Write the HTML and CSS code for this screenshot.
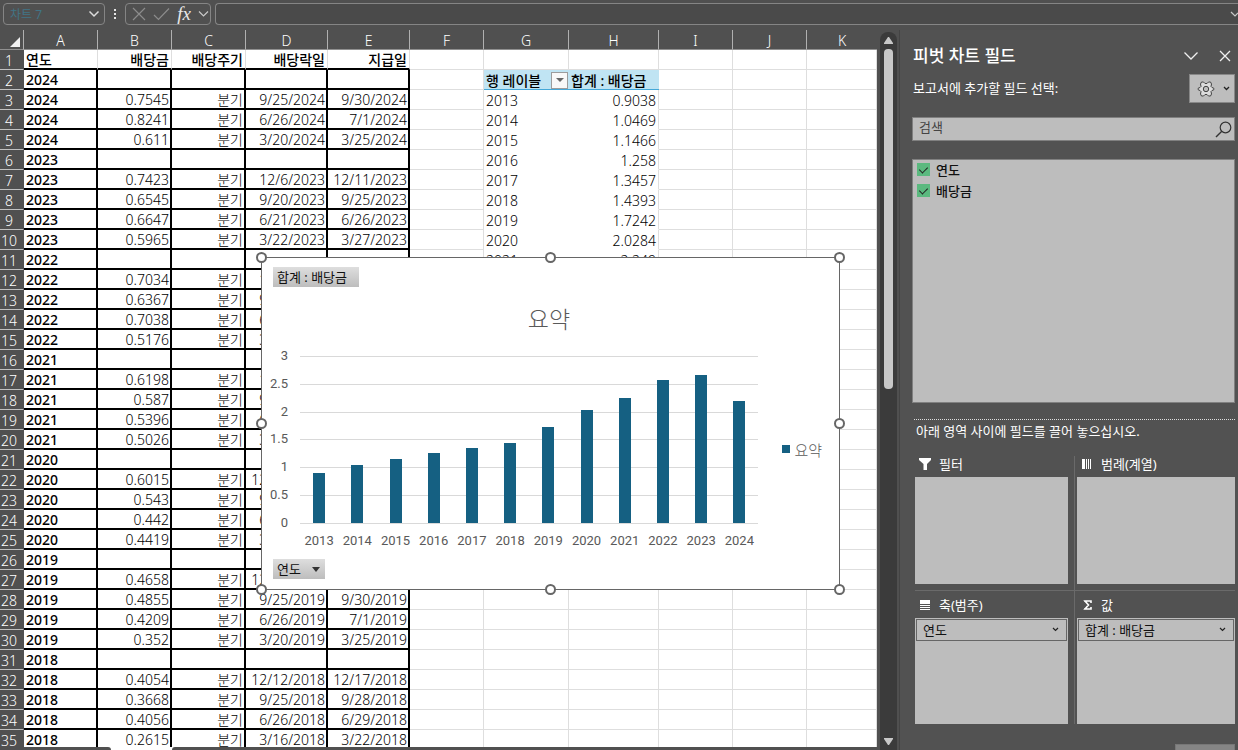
FILE: index.html
```html
<!DOCTYPE html>
<html lang="ko">
<head>
<meta charset="utf-8">
<title>배당금 피벗 차트</title>
<link rel="stylesheet" href="styles.css">
</head>
<body>
<header class="formula-bar">
  <div class="name-box">
    <input class="name-input" type="text" value="차트 7" aria-label="이름 상자">
    <button class="plain" aria-label="이름 목록"><svg width="12" height="8" viewBox="0 0 12 8"><path d="M1.5 1.500 6 6l4.500-4.500" fill="none" stroke="#dcdcdc" stroke-width="1.500"/></svg></button>
  </div>
  <svg class="grip" width="4" height="12" viewBox="0 0 4 12"><path d="M1 1h2v2H1zM1 5h2v2H1zM1 9h2v2H1z" fill="#e6e6e6"/></svg>
  <div class="fx-box">
    <button class="plain" aria-label="취소"><svg width="14" height="14" viewBox="0 0 14 14"><path d="M1 1l12 12M13 1 1 13" fill="none" stroke="#8c8c8c" stroke-width="1.200"/></svg></button>
    <button class="plain" aria-label="입력"><svg width="17" height="14" viewBox="0 0 17 14"><path d="M1 8l4.500 4.500L16 1.500" fill="none" stroke="#8c8c8c" stroke-width="1.200"/></svg></button>
    <button class="plain fx" aria-label="함수 삽입">fx</button>
    <button class="plain" aria-label="함수 목록"><svg width="11" height="8" viewBox="0 0 11 8"><path d="M1 1.500 5.500 6 10 1.500" fill="none" stroke="#c8c8c8" stroke-width="1.200"/></svg></button>
  </div>
  <input class="formula-input" type="text" aria-label="수식 입력줄">
  <button class="plain expand" aria-label="수식 입력줄 확장"><svg width="8" height="6" viewBox="0 0 8 6"><path d="M1 1l4 4 3-3" fill="none" stroke="#c8c8c8" stroke-width="1.200"/></svg></button>
</header>
<div class="workspace">
  <main class="sheet">
    <table class="grid">
      <colgroup><col class="w-head"><col class="w-s"><col class="w-s"><col class="w-s"><col class="w-date"><col class="w-date"><col class="w-s"><col class="w-g"><col class="w-h"><col class="w-s"><col class="w-s"><col></colgroup>
      <thead><tr><th><svg class="corner" width="10" height="10" viewBox="0 0 10 10"><path d="M10 0v10H0z" fill="#f0f0f0"/></svg></th><th>A</th><th>B</th><th>C</th><th>D</th><th>E</th><th>F</th><th>G</th><th>H</th><th>I</th><th>J</th><th>K</th></tr></thead>
      <tbody id="rows"></tbody>
    </table>
    <div class="tabs"><span class="tab-left"></span><span class="tab-rest"></span></div>
    <section class="chart" aria-label="피벗 차트">
      <button class="field-btn">합계 : 배당금</button>
      <h2 class="chart-title">요약</h2>
      <div class="chart-body">
        <div class="y-axis"><span>3</span><span>2.5</span><span>2</span><span>1.5</span><span>1</span><span>0.5</span><span>0</span></div>
        <div class="plot">
          <div class="plot-area">
            <div class="lines"><i></i><i></i><i></i><i></i><i></i><i></i><i></i></div>
            <div class="bars" id="bars"></div>
          </div>
          <div class="x-axis" id="years"></div>
        </div>
        <div class="legend"><i></i>요약</div>
      </div>
      <button class="field-btn year-btn">연도<svg width="8" height="5" viewBox="0 0 8 5"><path d="M0 0h8L4 5z" fill="#333"/></svg></button>
      <i class="handle t l"></i><i class="handle t c"></i><i class="handle t r"></i>
      <i class="handle m l"></i><i class="handle m r"></i>
      <i class="handle b l"></i><i class="handle b c"></i><i class="handle b r"></i>
    </section>
  </main>
  <div class="scrollbar">
    <svg width="9" height="8" viewBox="0 0 9 8"><path d="M4 0h1l4 6v1H0V6z" fill="#c8c8c8"/></svg>
    <span class="thumb"></span>
    <svg class="down" width="9" height="8" viewBox="0 0 9 8"><path d="M0 0h9v1L5 7H4L0 1z" fill="#c8c8c8"/></svg>
  </div>
  <aside class="panel">
    <div class="panel-head">
      <h1>피벗 차트 필드</h1>
      <button class="plain" aria-label="작업창 옵션"><svg width="16" height="10" viewBox="0 0 16 10"><path d="M1.500 1.500 8 8l6.500-6.500" fill="none" stroke="#f0f0f0" stroke-width="1.300"/></svg></button>
      <button class="plain" aria-label="닫기"><svg width="12" height="12" viewBox="0 0 12 12"><path d="M1 1l10 10M11 1 1 11" fill="none" stroke="#f0f0f0" stroke-width="1.300"/></svg></button>
    </div>
    <div class="panel-sub">
      <span>보고서에 추가할 필드 선택:</span>
      <button class="gear" aria-label="도구">
        <svg width="18" height="18" viewBox="0 0 18 18"><path d="M4.500 2h2L8 3.500h2L11.500 2h2L14.500 4l-.5 2.500 1 1 1.800.7v1.600l-1.800.7-1 1 .5 2.500-1 2h-2L10 14.500H8L6.500 16h-2l-1-2 .5-2.500-1-1-1.800-.7V8.200L3 7.500l1-1L3.500 4z" fill="#dcdcdc" stroke="#444"/><circle cx="9" cy="9" r="2.700" fill="#bdbdbd" stroke="#444"/></svg>
        <svg width="7" height="5" viewBox="0 0 7 5"><path d="M1 1l2.500 2.500L6 1" fill="none" stroke="#222" stroke-width="1.300"/></svg>
      </button>
    </div>
    <div class="search">
      <input type="text" placeholder="검색" aria-label="검색">
      <svg width="17" height="17" viewBox="0 0 17 17"><circle cx="10.500" cy="6.500" r="5.300" fill="none" stroke="#333" stroke-width="1.200"/><path d="M6.800 10.300 1 16" stroke="#333" stroke-width="1.400"/></svg>
    </div>
    <div class="fields">
      <label><input type="checkbox" checked>연도</label>
      <label><input type="checkbox" checked>배당금</label>
    </div>
    <p class="hint">아래 영역 사이에 필드를 끌어 놓으십시오.</p>
    <div class="areas">
      <section class="area">
        <h3><svg width="12" height="12" viewBox="0 0 12 12"><path d="M0 0h12v2L8 6v6H4.500V6L0 2z" fill="#fff"/></svg>필터</h3>
        <div class="drop"></div>
      </section>
      <section class="area">
        <h3><svg width="12" height="12" viewBox="0 0 12 12"><path d="M1 1h3v10H1zM5 1h1v10H5zM7 1h1v10H7zM9 1h1v10H9z" fill="#fff"/></svg>범례(계열)</h3>
        <div class="drop"></div>
      </section>
      <section class="area">
        <h3><svg width="12" height="12" viewBox="0 0 12 12"><path d="M1 1h10v4H1zM1 6h10v1H1zM1 8h10v1H1zM1 10h10v1H1z" fill="#fff"/></svg>축(범주)</h3>
        <div class="drop"><button class="chip">연도<svg width="7" height="5" viewBox="0 0 7 5"><path d="M1 1l2.500 2.500L6 1" fill="none" stroke="#222" stroke-width="1.200"/></svg></button></div>
      </section>
      <section class="area">
        <h3><svg width="12" height="12" viewBox="0 0 12 12"><path d="M10 4V2H4l3.500 4L4 10h6V8M3 2h5M3 10h5" fill="none" stroke="#fff" stroke-width="1.600"/></svg>값</h3>
        <div class="drop"><button class="chip">합계 : 배당금<svg width="7" height="5" viewBox="0 0 7 5"><path d="M1 1l2.500 2.500L6 1" fill="none" stroke="#222" stroke-width="1.200"/></svg></button></div>
      </section>
    </div>
    <button class="update" aria-label="업데이트"></button>
  </aside>
</div>
<script src="app.js"></script>
</body>
</html>
```

FILE: app.js
```js
const rows = [
  ['연도', '배당금', '배당주기', '배당락일', '지급일'],
  ['2024'],
  ['2024', '0.7545', '분기', '9/25/2024', '9/30/2024'],
  ['2024', '0.8241', '분기', '6/26/2024', '7/1/2024'],
  ['2024', '0.611', '분기', '3/20/2024', '3/25/2024'],
  ['2023'],
  ['2023', '0.7423', '분기', '12/6/2023', '12/11/2023'],
  ['2023', '0.6545', '분기', '9/20/2023', '9/25/2023'],
  ['2023', '0.6647', '분기', '6/21/2023', '6/26/2023'],
  ['2023', '0.5965', '분기', '3/22/2023', '3/27/2023'],
  ['2022'],
  ['2022', '0.7034', '분기', '12/7/2022'],
  ['2022', '0.6367', '분기', '9/21/2022'],
  ['2022', '0.7038', '분기', '6/22/2022'],
  ['2022', '0.5176', '분기', '3/23/2022'],
  ['2021'],
  ['2021', '0.6198', '분기', '12/8/2021'],
  ['2021', '0.587', '분기', '9/22/2021'],
  ['2021', '0.5396', '분기', '6/23/2021'],
  ['2021', '0.5026', '분기', '3/24/2021'],
  ['2020'],
  ['2020', '0.6015', '분기', '12/10/2020'],
  ['2020', '0.543', '분기', '9/23/2020'],
  ['2020', '0.442', '분기', '6/24/2020'],
  ['2020', '0.4419', '분기', '3/25/2020'],
  ['2019'],
  ['2019', '0.4658', '분기', '12/16/2019'],
  ['2019', '0.4855', '분기', '9/25/2019', '9/30/2019'],
  ['2019', '0.4209', '분기', '6/26/2019', '7/1/2019'],
  ['2019', '0.352', '분기', '3/20/2019', '3/25/2019'],
  ['2018'],
  ['2018', '0.4054', '분기', '12/12/2018', '12/17/2018'],
  ['2018', '0.3668', '분기', '9/25/2018', '9/28/2018'],
  ['2018', '0.4056', '분기', '6/26/2018', '6/29/2018'],
  ['2018', '0.2615', '분기', '3/16/2018', '3/22/2018']
];
const totals = [
  ['2013', 0.9038], ['2014', 1.0469], ['2015', 1.1466], ['2016', 1.258],
  ['2017', 1.3457], ['2018', 1.4393], ['2019', 1.7242], ['2020', 2.0284],
  ['2021', 2.249], ['2022', 2.5615], ['2023', 2.658], ['2024', 2.1896]
];
const filter = '<button class="filter" aria-label="필터"><svg width="8" height="4" viewBox="0 0 8 4"><path d="M0 0h8L4 4z" fill="#666"/></svg></button>';
const pivotRows = totals.slice(0, 9);

document.getElementById('rows').innerHTML = rows.map((row, i) => {
  let html = `<th scope="row">${i + 1}</th>`;
  for (let c = 0; c < 5; c++) html += `<td class="data">${row[c] || ''}</td>`;
  html += '<td></td>';
  const total = pivotRows[i - 2];
  if (i === 1) html += `<td class="pivot-head"><div class="pivot-label">행 레이블${filter}</div></td><td class="pivot-head">합계 : 배당금</td>`;
  else if (total) html += `<td class="pivot">${total[0]}</td><td class="pivot num">${total[1]}</td>`;
  else html += '<td></td><td></td>';
  return `<tr>${html}<td></td><td></td><td></td></tr>`;
}).join('');
document.getElementById('bars').innerHTML = totals.map(t => `<span><i style="height:${(t[1] / 3 * 100).toFixed(2)}%"></i></span>`).join('');
document.getElementById('years').innerHTML = totals.map(t => `<span>${t[0]}</span>`).join('');
```

FILE: styles.css
```css
* { box-sizing: border-box; }
body {
  margin: 0;
  height: 100vh;
  overflow: hidden;
  display: flex;
  flex-direction: column;
  background: #505050;
  font-family: "Noto Sans", "Noto Sans CJK KR", sans-serif;
  font-size: 14px;
  color: #000;
}
button, input { font: inherit; color: inherit; }
svg { display: block; flex: none; }
h1, h2, h3, p { margin: 0; font-weight: 400; }
.plain { border: 0; padding: 0; background: none; display: flex; align-items: center; }

.formula-bar { flex: none; display: flex; align-items: center; height: 30px; padding: 0 0 2px 3px; }
.name-box, .fx-box { display: flex; align-items: center; height: 22px; border: 1px solid #858585; border-radius: 4px; }
.name-box { width: 102px; padding: 0 4px 0 6px; justify-content: space-between; }
.name-input { width: 70px; border: 0; padding: 0; background: none; color: #417486; font-size: 12px; }
.grip { margin: 0 8px; }
.fx-box { width: 86px; padding: 0 1px 0 6px; justify-content: space-between; }
.fx { font: italic 19px/20px "Liberation Serif", serif; color: #e8e8e8; }
.formula-input { flex: 1; min-width: 0; height: 22px; margin-left: 4px; border: 1px solid #858585; border-right: 0; border-radius: 4px 0 0 4px; background: #4a4a4a; }
.expand { height: 22px; border: solid #858585; border-width: 1px 0; background: #4a4a4a; }

.workspace { flex: 1; min-height: 0; display: flex; }
.sheet { flex: 1; min-width: 0; position: relative; overflow: hidden; background: #fff; }
.grid { width: 100%; table-layout: fixed; border-collapse: separate; border-spacing: 0; line-height: 17px; font-weight: 300; }
.w-head { width: 24px; }
.w-s { width: 74px; }
.w-date { width: 82px; }
.w-g { width: 85px; }
.w-h { width: 90px; }
.grid th { height: 20px; padding: 1px 0 0; font-weight: 300; color: #fff; background: #505050; overflow: hidden; }
thead th { border-right: 1px solid #b0b0b0; border-bottom: 1px solid #909090; }
thead th:last-child { border-right: 0; }
.corner { margin: 3px 3px 0 auto; }
.grid tbody th { border-right: 1px solid #505050; border-bottom: 1px solid #c0c0c0; padding-right: 5px; }
.grid td { height: 20px; padding: 1px 2px 0; white-space: nowrap; overflow: hidden; border-right: 1px solid #dedede; border-bottom: 1px solid #dedede; }
.grid .data { text-align: right; border-bottom: 2px solid #000; border-right: 2px solid #000; padding-right: 1px; }
.grid .data:nth-child(2) { text-align: left; font-weight: 500; }
.grid tbody tr:first-child .data { border-right: 1px solid #dedede; font-weight: 500; padding-right: 2px; }
.grid .pivot { border-color: #fff; padding-top: 2px; }
.grid .pivot.num { text-align: right; border-right-color: #dedede; }
.grid .pivot-head { background: #c0e4f3; border-right: 0; border-bottom-color: #45a8d8; font-weight: 500; }
.pivot-label { display: flex; justify-content: space-between; align-items: center; height: 17px; margin-right: -1px; }
.filter { display: flex; align-items: center; justify-content: center; width: 17px; height: 17px; padding: 0; border: 1px solid #9c9c9c; background: #f8f8f8; }
.tabs { position: absolute; left: 0; right: 0; bottom: 0; display: flex; gap: 61px; height: 3px; background: #fff; }
.tab-left { width: 111px; background: #505050; border-top-right-radius: 3px; }
.tab-rest { flex: 1; background: #505050; border-top-left-radius: 3px; }

.chart { position: absolute; left: 261px; top: 227px; width: 579px; height: 333px; padding: 9px 17px 10px 11px; border: 1px solid #666; background: #fff; color: #595959; display: flex; flex-direction: column; align-items: flex-start; }
.field-btn { height: 20px; padding: 0 12px 0 4px; border: 0; background: linear-gradient(#dedede, #bdbdbd); color: #111; font-size: 13px; line-height: 20px; }
.year-btn { display: flex; align-items: center; gap: 11px; padding-right: 5px; }
.chart-title { align-self: center; font-size: 23px; font-weight: 300; line-height: 32px; margin: 16px 0 14px 3px; }
.chart-body { display: flex; align-self: stretch; flex: 1; }
.y-axis { width: 15px; height: 181px; display: flex; flex-direction: column; justify-content: space-between; align-items: flex-end; font: 13px/14px Roboto, sans-serif; }
.plot { flex: 1; margin-left: 12px; padding-top: 7px; }
.plot-area { display: grid; height: 168px; }
.lines, .bars { grid-area: 1 / 1; display: flex; }
.lines { flex-direction: column; justify-content: space-between; }
.lines i { height: 1px; background: #d9d9d9; }
.bars { padding-bottom: 1px; }
.bars span { flex: 1; display: flex; align-items: flex-end; justify-content: center; }
.bars i { width: 12px; background: #156082; }
.x-axis { display: flex; margin-top: 9px; font: 13px/16px Roboto, sans-serif; }
.x-axis span { flex: 1; text-align: center; }
.legend { display: flex; align-items: center; gap: 4px; height: 20px; margin: 90px 0 0 24px; font-size: 15px; font-weight: 300; }
.legend i { width: 8px; height: 8px; background: #156082; }
.handle { position: absolute; width: 11px; height: 11px; border: 2px solid #666; border-radius: 50%; background: #fff; }
.t { top: -6px; }
.m { top: calc(50% - 6px); }
.b { bottom: -6px; }
.l { left: -6px; }
.c { left: calc(50% - 6px); }
.r { right: -6px; }

.scrollbar { flex: none; width: 17px; margin: 2px 2px 0 3px; padding: 5px 0 4px; border-radius: 8px 8px 0 0; background: #3b3b3b; display: flex; flex-direction: column; align-items: center; }
.thumb { width: 9px; height: 48%; margin-top: 4px; border-radius: 4px; background: #c8c8c8; }
.down { margin-top: auto; }

.panel { flex: none; width: 339px; padding: 15px 3px 0 12px; border-left: 1px solid #444; background: #525252; color: #fff; font-size: 13px; display: flex; flex-direction: column; }
.panel-head { display: flex; align-items: center; gap: 20px; height: 22px; padding: 0 4px 0 1px; }
.panel-head h1 { flex: 1; font-size: 17px; line-height: 22px; font-weight: 500; }
.panel-sub { display: flex; align-items: center; justify-content: space-between; margin-top: 7px; padding-left: 1px; height: 29px; line-height: 20px; }
.panel-sub span { padding-bottom: 2px; }
.gear { display: flex; align-items: center; justify-content: center; gap: 8px; width: 46px; height: 29px; padding: 0 0 0 2px; border: 1px solid #888; background: #bdbdbd; }
.search { display: flex; align-items: center; height: 24px; margin-top: 14px; padding: 0 2px 0 6px; border: 1px solid #808080; background: #bdbdbd; color: #333; }
.search input { flex: 1; min-width: 0; border: 0; padding: 0 0 4px; background: none; height: 22px; }
.search input::placeholder { color: #444; opacity: 1; }
.fields { flex: 1; margin-top: 18px; padding: 0 4px; border: 1px solid #808080; background: #bdbdbd; color: #111; }
.fields label { display: flex; align-items: center; gap: 6px; height: 21px; padding-bottom: 2px; font-weight: 500; }
.fields input { appearance: none; display: flex; justify-content: center; width: 13px; height: 13px; margin: 0; background: #5bb97f; }
.fields input:checked::before { content: ""; width: 4px; height: 7px; margin-top: 2px; border: solid #222; border-width: 0 1px 1px 0; transform: rotate(45deg); }
.hint { margin: 16px 0 0 2px; padding: 1px 2px 0; border-top: 1px dotted #ddd; line-height: 20px; }
.areas { display: grid; grid-template-columns: 160px 1fr; grid-template-rows: 134px 134px; margin: 15px 0 20px 3px; }
.area { display: flex; flex-direction: column; padding: 0 0 6px 2px; }
.area:nth-child(odd) { padding: 0 6px 6px 0; border-right: 1px solid #6a6a6a; }
.area:nth-child(n+3) { padding-bottom: 0; border-top: 1px solid #6a6a6a; }
.area h3 { display: flex; align-items: center; gap: 8px; height: 27px; padding: 0 0 0 4px; font-size: 13px; line-height: 20px; }
.area:nth-child(-n+2) h3 { height: 21px; padding-bottom: 5px; }
.drop { flex: 1; padding: 1px; background: #bdbdbd; }
.chip { display: flex; justify-content: space-between; align-items: center; width: 100%; height: 22px; padding: 0 7px 2px 6px; border: 1px solid #666; background: #bdbdbd; color: #111; }
.update { flex: none; align-self: flex-end; width: 60px; height: 6px; padding: 0; border: 1px solid #777; border-bottom: 0; background: #858585; }
```
